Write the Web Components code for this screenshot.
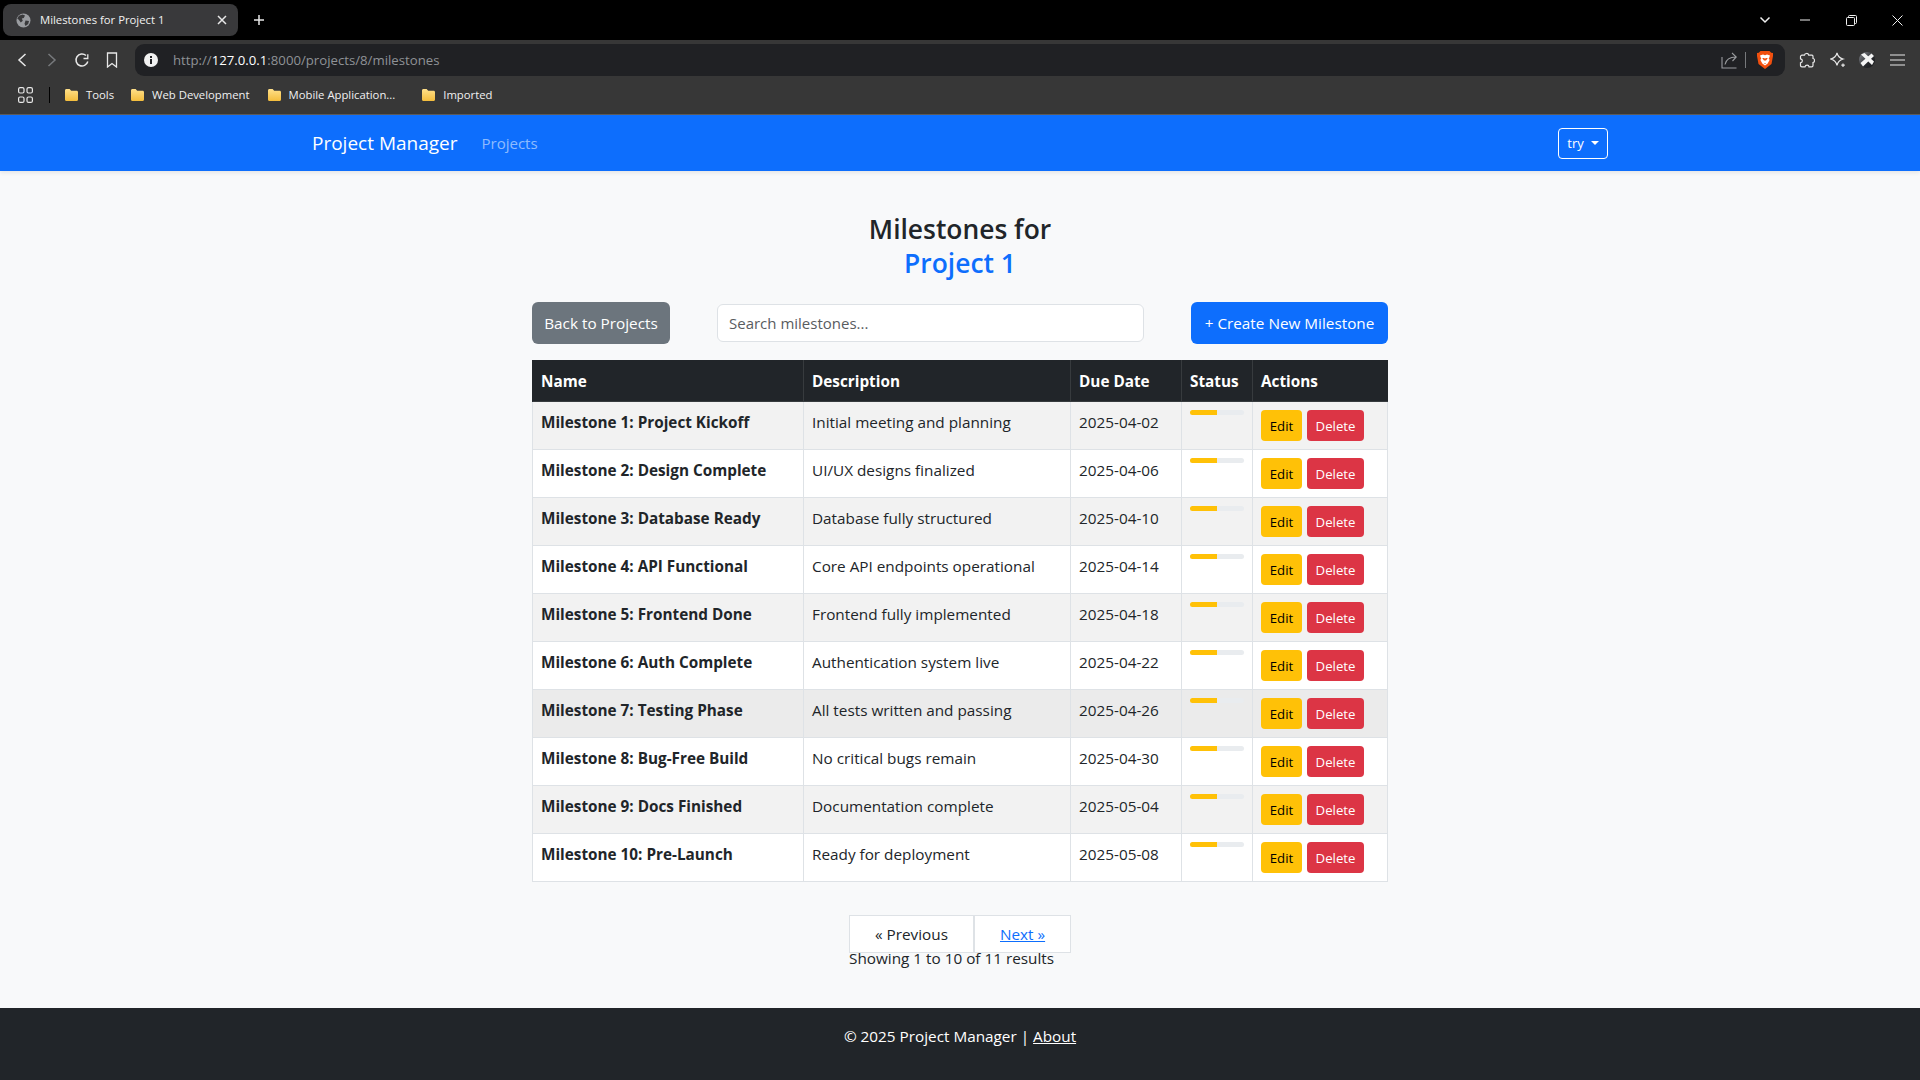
<!DOCTYPE html>
<html lang="en">
<head>
<meta charset="utf-8">
<title>Milestones for Project 1</title>
<style>
  html, body { height: 100%; }
  body {
    margin: 0;
    display: flex;
    flex-direction: column;
    min-height: 1080px;
    background: #f8f9fa;
    color: #212529;
    font: 15.3px/24px "Open Sans", "Noto Sans", sans-serif;
  }
</style>
</head>
<body>
<browser-chrome></browser-chrome>
<app-navbar>
  <span slot="brand">Project Manager</span>
  <span slot="link">Projects</span>
  <span slot="user">try</span>
</app-navbar>
<milestones-page>
  <span slot="title">Milestones for</span>
  <span slot="project">Project 1</span>
  <milestone-table>
    <milestone-row><span slot="name">Milestone 1: Project Kickoff</span><span slot="desc">Initial meeting and planning</span><span slot="due">2025-04-02</span></milestone-row>
    <milestone-row><span slot="name">Milestone 2: Design Complete</span><span slot="desc">UI/UX designs finalized</span><span slot="due">2025-04-06</span></milestone-row>
    <milestone-row><span slot="name">Milestone 3: Database Ready</span><span slot="desc">Database fully structured</span><span slot="due">2025-04-10</span></milestone-row>
    <milestone-row><span slot="name">Milestone 4: API Functional</span><span slot="desc">Core API endpoints operational</span><span slot="due">2025-04-14</span></milestone-row>
    <milestone-row><span slot="name">Milestone 5: Frontend Done</span><span slot="desc">Frontend fully implemented</span><span slot="due">2025-04-18</span></milestone-row>
    <milestone-row><span slot="name">Milestone 6: Auth Complete</span><span slot="desc">Authentication system live</span><span slot="due">2025-04-22</span></milestone-row>
    <milestone-row hover><span slot="name">Milestone 7: Testing Phase</span><span slot="desc">All tests written and passing</span><span slot="due">2025-04-26</span></milestone-row>
    <milestone-row><span slot="name">Milestone 8: Bug-Free Build</span><span slot="desc">No critical bugs remain</span><span slot="due">2025-04-30</span></milestone-row>
    <milestone-row><span slot="name">Milestone 9: Docs Finished</span><span slot="desc">Documentation complete</span><span slot="due">2025-05-04</span></milestone-row>
    <milestone-row><span slot="name">Milestone 10: Pre-Launch</span><span slot="desc">Ready for deployment</span><span slot="due">2025-05-08</span></milestone-row>
  </milestone-table>
</milestones-page>
<app-footer></app-footer>

<script>
function folderIcon() {
  return /* html */ `
    <svg width="15" height="14" viewBox="0 0 15 14">
      <defs><linearGradient id="f" x1="0" y1="0" x2="0" y2="1">
        <stop offset="0" stop-color="#ffe08a"/><stop offset="1" stop-color="#f4bd3c"/>
      </linearGradient></defs>
      <path d="M1 2.500C1 1.700 1.600 1 2.400 1h3.200l1.600 1.700h5.400c.8 0 1.400.6 1.400 1.400v7.400c0 .8-.6 1.500-1.400 1.500H2.400C1.600 13 1 12.300 1 11.500z" fill="url(#f)"/>
    </svg>`;
}

const chromeTemplate = document.createElement('template');
chromeTemplate.innerHTML = /* html */ `
  <style>
    :host {
      display: block;
      font: 11.3px/16px "Open Sans", sans-serif;
      color: #f1f1f1;
    }
    svg { display: block; flex: none; }
    .strip {
      height: 40px;
      background: #000;
      display: flex;
      align-items: center;
      padding-left: 3px;
      box-sizing: border-box;
    }
    .tab {
      width: 235px;
      height: 32px;
      box-sizing: border-box;
      background: #39393b;
      border-radius: 8px;
      display: flex;
      align-items: center;
      padding: 0 11px 0 13px;
    }
    .tab .title { margin-left: 9px; flex: 1; }
    .plus { margin-left: 15px; }
    .win { margin-left: auto; display: flex; align-items: center; }
    .bar {
      height: 36px;
      background: #373737;
      display: flex;
      align-items: flex-start;
      padding-top: 4px;
      box-sizing: border-box;
    }
    .nav { display: flex; align-items: center; height: 32px; }
    .address {
      margin-left: 17px;
      width: 1650px;
      height: 32px;
      box-sizing: border-box;
      background: #202124;
      border-radius: 9px;
      display: flex;
      align-items: center;
      padding: 0 12px 0 9px;
      font-size: 13.2px;
      color: #8f9296;
    }
    .address .url { margin-left: 15px; flex: 1; }
    .address b { font-weight: 400; color: #fff; }
    .tools { display: flex; align-items: center; height: 32px; }
    .marks {
      height: 39px;
      background: #373737;
      border-bottom: 1px solid #5b5b5b;
      box-sizing: border-box;
      display: flex;
      align-items: center;
      padding-left: 18px;
    }
    .sep { width: 1px; height: 16px; background: #000; margin: 0 14px 0 16px; }
    .mark { display: flex; align-items: center; gap: 7px; }
  </style>
  <div class="strip">
    <div class="tab">
      <svg width="15" height="15" viewBox="0 0 15 15">
        <circle cx="7.500" cy="7.500" r="7" fill="#9a9ca0"/>
        <path d="M3 2.800 6.500 1.500 9 2.500 7.800 5 5.800 5.500 6.800 7.800 4.800 9.500 2.800 6.800 1.200 5.500zM9.500 7.500l3.500.5-.8 3-2.700 2-1-2.300z" fill="#39393b"/>
      </svg>
      <span class="title">Milestones for Project 1</span>
      <svg width="10" height="10" viewBox="0 0 10 10" stroke="#e8e8e8" stroke-width="1.500"><path d="M1 1l8 8M9 1l-8 8"/></svg>
    </div>
    <svg class="plus" width="12" height="12" viewBox="0 0 12 12" stroke="#e8e8e8" stroke-width="1.500"><path d="M6 1v10M1 6h10"/></svg>
    <div class="win">
      <svg width="12" height="8" viewBox="0 0 12 8" fill="none" stroke="#f0f0f0" stroke-width="1.500"><path d="M1.500 1.500 6 6l4.500-4.500"/></svg>
      <svg style="margin-left:29px" width="10" height="2" viewBox="0 0 10 2" stroke="#f0f0f0"><path d="M0 1h10"/></svg>
      <svg style="margin-left:36px" width="11" height="11" viewBox="0 0 11 11" fill="none" stroke="#f0f0f0"><rect x=".5" y="2.500" width="8" height="8" rx="1"/><path d="M2.500 2.500V1.500a1 1 0 0 1 1-1h6a1 1 0 0 1 1 1v6a1 1 0 0 1-1 1h-1"/></svg>
      <svg style="margin:0 17px 0 35px" width="11" height="11" viewBox="0 0 11 11" stroke="#f0f0f0"><path d="M.5.5l10 10M10.500.5l-10 10"/></svg>
    </div>
  </div>
  <div class="bar">
    <div class="nav">
      <svg style="margin-left:16px" width="12" height="16" viewBox="0 0 12 16" fill="none" stroke="#e8e8e8" stroke-width="1.500"><path d="M9.500 2 3 8l6.500 6"/></svg>
      <svg style="margin-left:18px" width="12" height="16" viewBox="0 0 12 16" fill="none" stroke="#77797c" stroke-width="1.500"><path d="M2.500 2 9 8l-6.500 6"/></svg>
      <svg style="margin-left:16px" width="16" height="16" viewBox="0 0 16 16" fill="none" stroke="#e8e8e8" stroke-width="1.500"><path d="M13.800 9.500A6 6 0 1 1 12 3.500"/><path d="M9.500 6.500h4.300V2.200" stroke-width="1.300"/></svg>
      <svg style="margin-left:16px" width="12" height="16" viewBox="0 0 12 16" fill="none" stroke="#e8e8e8" stroke-width="1.300"><path d="M1.500 1h9v14L6 11.500 1.500 15z"/></svg>
    </div>
    <div class="address">
      <svg width="14" height="14" viewBox="0 0 14 14"><circle cx="7" cy="7" r="7" fill="#f1f1f1"/><path d="M6 3h2v2H6zM6 6h2v5H6z" fill="#202124"/></svg>
      <span class="url">http://<b>127.0.0.1</b>:8000/projects/8/milestones</span>
      <svg width="16" height="17" viewBox="0 0 16 17" fill="none" stroke="#9a9c9f" stroke-width="1.100"><path d="M1 5v11h14.500"/><path d="M4 12.500C5 7.500 8 5 15 5M11 1l4.300 4L11.500 9"/></svg>
      <span style="width:1px;height:16px;background:#77797c;margin:0 11px 0 8px"></span>
      <svg width="16" height="18" viewBox="0 0 16 18">
        <path d="M3.500 0h9l1.700 1.700L16 2v3l-1.500 8L8 18l-6.500-5L0 5V2l1.800-.3z" fill="#f1500f"/>
        <path d="M3 4.500 6 3.500l2 .8 2-.8 3 1-1.300 3.500 1 .8-2 3.700L8 14.500l-2.700-2-2-3.700 1-.8z" fill="#fff"/>
        <path d="M5.200 7h2.100L8 8l.7-1h2.100L9 9.500H7zM7 12h2l-1 1z" fill="#f1500f"/>
      </svg>
    </div>
    <div class="tools">
      <svg style="margin-left:14px" width="16" height="16" viewBox="0 0 16 16" fill="none" stroke="#e8e8e8" stroke-width="1.200"><path d="M5.500 3.200C5.800 1 9.200.8 9.700 3.200H13c.8 0 1 .6 1 1.300v2c2 0 2 4 0 4v3c0 .8-.6 1.300-1.300 1.300H10c-.2-2.300-3.500-2.300-4 0H3c-.8 0-1.500-.6-1.500-1.400v-2.600c2.500-.3 2.500-3.800 0-4V4.500c0-.7.7-1.300 1.500-1.300z"/></svg>
      <svg style="margin-left:15px" width="16" height="16" viewBox="0 0 16 16" fill="none" stroke="#e8e8e8" stroke-width="1.200"><path d="M7 1c.7 3.200 2 4.800 6 6-4 1.200-5.300 2.800-6 6.500C6.300 9.800 5 8.200 .8 7 5 5.800 6.300 4.200 7 1z"/><path d="M13 11.500v3.500M11.300 13.200h3.500"/></svg>
      <svg style="margin-left:13px" width="16" height="16" viewBox="0 0 16 16">
        <defs><linearGradient id="a" x1="0" y1="0" x2="1" y2="1"><stop offset="0" stop-color="#8a8d93"/><stop offset=".6" stop-color="#26282c"/><stop offset="1" stop-color="#17181a"/></linearGradient></defs>
        <circle cx="8" cy="8" r="8" fill="url(#a)"/>
        <path d="M2 2.500 5.500 1 15 9.500 13 13zM12.500 1.500 15 4 4 14.500 1.500 11z" fill="#f4f4f4"/>
      </svg>
      <svg style="margin-left:15px" width="15" height="12" viewBox="0 0 15 12" stroke="#e8e8e8" stroke-width="1.200"><path d="M0 1h15M0 6h15M0 11h15"/></svg>
    </div>
  </div>
  <div class="marks">
    <svg width="15" height="16" viewBox="0 0 15 16" fill="none" stroke="#e8e8e8" stroke-width="1.200"><rect x=".6" y=".6" width="5.400" height="5.400" rx="1.500"/><rect x="9" y=".6" width="5.400" height="5.400" rx="1.500"/><rect x=".6" y="10" width="5.400" height="5.400" rx="1.500"/><rect x="9" y="10" width="5.400" height="5.400" rx="1.500"/></svg>
    <span class="sep"></span>
    <span class="mark">${folderIcon()}<span>Tools</span></span>
    <span class="mark" style="margin-left:16px">${folderIcon()}<span>Web Development</span></span>
    <span class="mark" style="margin-left:17px">${folderIcon()}<span>Mobile Application...</span></span>
    <span class="mark" style="margin-left:26px">${folderIcon()}<span>Imported</span></span>
  </div>
`;

class BrowserChrome extends HTMLElement {
  constructor() {
    super();
    this.attachShadow({ mode: 'open' }).appendChild(chromeTemplate.content.cloneNode(true));
  }
}

const navbarTemplate = document.createElement('template');
navbarTemplate.innerHTML = /* html */ `
  <style>
    :host {
      display: block;
      background: #0d6efd;
      color: #fff;
      box-shadow: 0 2px 4px rgba(0, 0, 0, .08);
      position: relative;
    }
    .inner {
      width: 1296px;
      height: 56px;
      margin: 0 auto;
      display: flex;
      align-items: center;
    }
    .brand { font-size: 19px; }
    .link { margin-left: 24px; color: rgba(255, 255, 255, .55); font-size: 15px; }
    .user {
      margin-left: auto;
      width: 50px;
      height: 31px;
      box-sizing: border-box;
      border: 1px solid #fff;
      border-radius: 4px;
      display: flex;
      align-items: center;
      justify-content: center;
      gap: 7px;
      font-size: 13px;
    }
    .caret {
      border-top: 4.200px solid #fff;
      border-left: 4.200px solid transparent;
      border-right: 4.200px solid transparent;
    }
  </style>
  <div class="inner">
    <span class="brand"><slot name="brand"></slot></span>
    <span class="link"><slot name="link"></slot></span>
    <span class="user"><slot name="user"></slot><span class="caret"></span></span>
  </div>
`;

class AppNavbar extends HTMLElement {
  constructor() {
    super();
    this.attachShadow({ mode: 'open' }).appendChild(navbarTemplate.content.cloneNode(true));
  }
}

const btnTemplate = document.createElement('template');
btnTemplate.innerHTML = /* html */ `
  <style>
    :host {
      display: inline-flex;
      align-items: center;
      justify-content: center;
      box-sizing: border-box;
      height: 42px;
      border-radius: 6px;
      color: #fff;
      background: #6c757d;
    }
    :host([variant="primary"]) { background: #0d6efd; }
    :host([variant="warning"]) { background: #ffc107; color: #000; }
    :host([variant="danger"]) { background: #dc3545; }
    :host([small]) { height: 31px; border-radius: 4px; font-size: 13.2px; }
  </style>
  <slot></slot>
`;

class AppBtn extends HTMLElement {
  constructor() {
    super();
    this.attachShadow({ mode: 'open' }).appendChild(btnTemplate.content.cloneNode(true));
  }
}

const pageTemplate = document.createElement('template');
pageTemplate.innerHTML = /* html */ `
  <style>
    :host {
      display: block;
      width: 856px;
      margin: 0 auto;
      padding: 41px 0 38px;
    }
    h3 {
      margin: 0 0 22px;
      text-align: center;
      font-size: 26.4px;
      line-height: 34px;
      font-weight: 600;
    }
    h3 span { display: block; }
    h3 .project { color: #0d6efd; }
    .toolbar {
      display: flex;
      justify-content: space-between;
      align-items: center;
      margin-bottom: 16px;
    }
    .back { width: 138px; }
    .create { width: 197px; }
    .search {
      width: 427px;
      height: 38px;
      box-sizing: border-box;
      padding: 0 11px;
      border: 1px solid #dee2e6;
      border-radius: 6px;
      background: #fff;
      font: inherit;
      font-size: 15px;
      color: #212529;
      outline: none;
    }
    .search::placeholder { color: #595c5f; opacity: 1; }
    .pager { width: 222px; margin: 40px auto 0; }
    .pages { white-space: nowrap; }
    .pages span {
      padding: 8px 25px;
      border: 1px solid #dee2e6;
      background: #fff;
    }
    .pages a { color: #0d6efd; text-decoration: underline; }
  </style>
  <h3>
    <span><slot name="title"></slot></span>
    <span class="project"><slot name="project"></slot></span>
  </h3>
  <div class="toolbar">
    <app-btn class="back">Back to Projects</app-btn>
    <input class="search" type="text" placeholder="Search milestones...">
    <app-btn class="create" variant="primary">+ Create New Milestone</app-btn>
  </div>
  <slot></slot>
  <div class="pager">
    <div class="pages"><span>« Previous</span><span><a href="#">Next »</a></span></div>
    <div>Showing 1 to 10 of 11 results</div>
  </div>
`;

class MilestonesPage extends HTMLElement {
  constructor() {
    super();
    this.attachShadow({ mode: 'open' }).appendChild(pageTemplate.content.cloneNode(true));
  }
}

const COLUMNS = '271px 267px 111px 71px 136px';

const tableTemplate = document.createElement('template');
tableTemplate.innerHTML = /* html */ `
  <style>
    :host { display: block; }
    .head {
      display: grid;
      grid-template-columns: ${COLUMNS};
      background: #212529;
      color: #fff;
      font-weight: 700;
    }
    .head div {
      padding: 9px 8px 8px 8px;
      border-left: 1px solid #373b3e;
      border-bottom: 1px solid #373b3e;
    }
    .head div:first-child { border-left: 1px solid #212529; }
  </style>
  <div class="head">
    <div>Name</div>
    <div>Description</div>
    <div>Due Date</div>
    <div>Status</div>
    <div>Actions</div>
  </div>
  <slot></slot>
`;

class MilestoneTable extends HTMLElement {
  constructor() {
    super();
    this.attachShadow({ mode: 'open' }).appendChild(tableTemplate.content.cloneNode(true));
  }
}

const rowTemplate = document.createElement('template');
rowTemplate.innerHTML = /* html */ `
  <style>
    :host {
      display: grid;
      grid-template-columns: ${COLUMNS};
      height: 48px;
      box-sizing: border-box;
      border-bottom: 1px solid #dee2e6;
      background: #fff;
    }
    :host(:nth-child(odd)) { background: #f2f2f2; }
    :host([hover]) { background: #ebebeb; }
    .cell { padding: 8px 8px 0 8px; border-left: 1px solid #dee2e6; }
    .name { font-weight: 700; }
    .track {
      height: 5px;
      border-radius: 3px;
      background: #e9ecef;
      overflow: hidden;
    }
    .fill { width: 50%; height: 100%; background: #ffc107; }
    .actions { display: flex; gap: 5px; border-right: 1px solid #dee2e6; }
    .edit { width: 41px; }
    .delete { width: 57px; }
  </style>
  <div class="cell name"><slot name="name"></slot></div>
  <div class="cell"><slot name="desc"></slot></div>
  <div class="cell"><slot name="due"></slot></div>
  <div class="cell"><div class="track"><div class="fill"></div></div></div>
  <div class="cell actions">
    <app-btn class="edit" small variant="warning">Edit</app-btn>
    <app-btn class="delete" small variant="danger">Delete</app-btn>
  </div>
`;

class MilestoneRow extends HTMLElement {
  constructor() {
    super();
    this.attachShadow({ mode: 'open' }).appendChild(rowTemplate.content.cloneNode(true));
  }
}

const footerTemplate = document.createElement('template');
footerTemplate.innerHTML = /* html */ `
  <style>
    :host {
      display: block;
      flex: 1;
      background: #212529;
      color: #fff;
      text-align: center;
      padding-top: 16px;
    }
    a { color: #fff; }
  </style>
  © 2025 Project Manager | <a href="#">About</a>
`;

class AppFooter extends HTMLElement {
  constructor() {
    super();
    this.attachShadow({ mode: 'open' }).appendChild(footerTemplate.content.cloneNode(true));
  }
}

customElements.define('browser-chrome', BrowserChrome);
customElements.define('app-navbar', AppNavbar);
customElements.define('app-btn', AppBtn);
customElements.define('milestones-page', MilestonesPage);
customElements.define('milestone-table', MilestoneTable);
customElements.define('milestone-row', MilestoneRow);
customElements.define('app-footer', AppFooter);
</script>
</body>
</html>
